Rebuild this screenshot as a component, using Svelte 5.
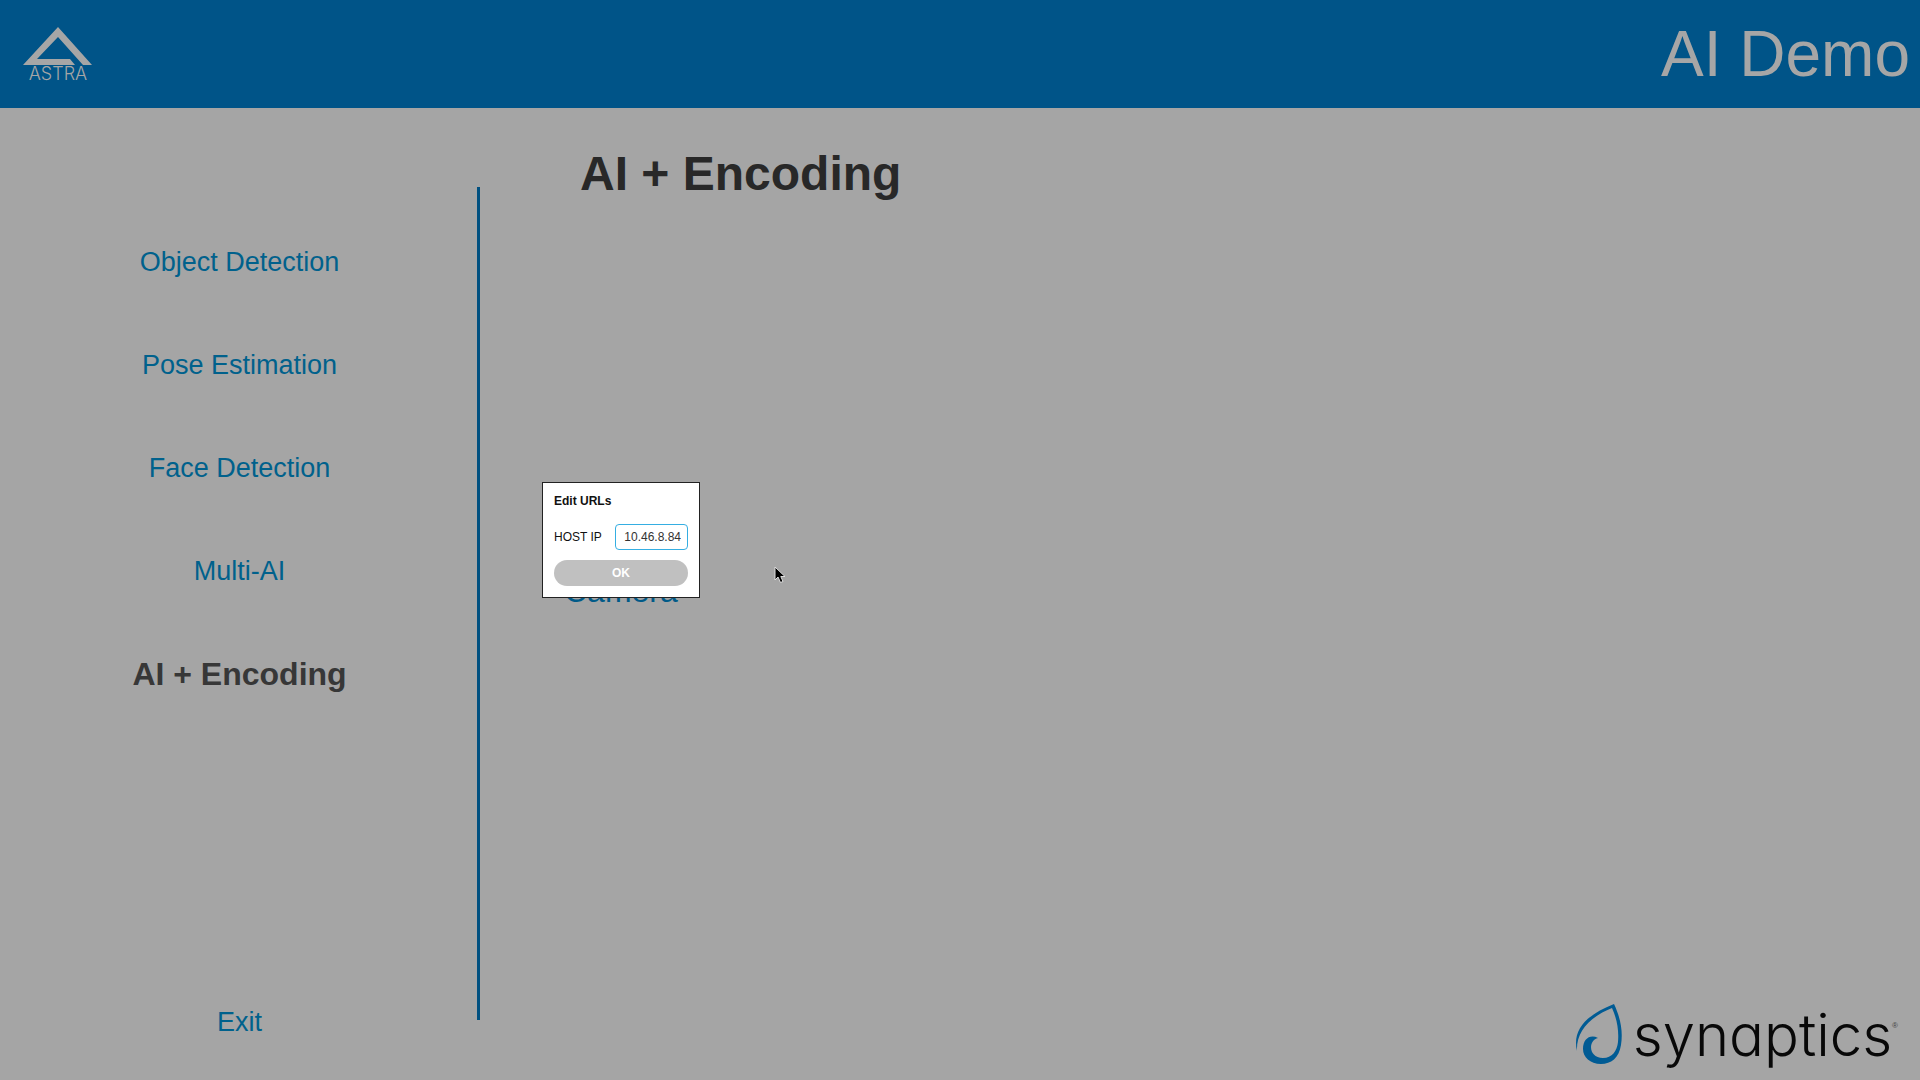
<script lang="ts">
  const items = ['Object Detection', 'Pose Estimation', 'Face Detection', 'Multi-AI', 'AI + Encoding'];
  let active = $state('AI + Encoding');
  let host = $state('10.46.8.84');
</script>

<div class="app">
  <header>
    <div class="astra">
      <svg viewBox="0 0 70 40" aria-hidden="true">
        <path d="M35 0 L69 38 H60 L35 10 L14 32 H47 L52 38 H0 Z" />
      </svg>
      <span>ASTRA</span>
    </div>
    <p class="product">AI Demo</p>
  </header>

  <div class="body">
    <nav>
      {#each items as item}
        <button class="link" class:active={item === active} onclick={() => (active = item)}>{item}</button>
      {/each}
      <button class="link exit">Exit</button>
    </nav>
    <main>
      <h1>{active}</h1>
      <button class="camera">Camera</button>
      <div class="synaptics">
        <svg viewBox="0 0 48 62" aria-hidden="true">
          <path d="M2 47 C-3 26 11 11 39 0 C46 15 48 28 46 41 C44 54 36 60 26 60 C15 60 8 53 8 45 C8 35 15 30 23 34 C13 36 13 54 28 54 C37 54 42 47 43 38 C44 26 42 15 37 4 C15 13 1 27 2 47 Z" />
        </svg>
        <span>synaptics</span><sup>®</sup>
      </div>
    </main>
  </div>

  <form class="dialog" onsubmit={(e) => e.preventDefault()}>
    <h2>Edit URLs</h2>
    <div class="field">
      <label for="host">HOST IP</label>
      <input id="host" type="text" bind:value={host} />
    </div>
    <button class="ok">OK</button>
  </form>

  <svg class="cursor" viewBox="0 0 12 18" aria-hidden="true">
    <path d="M1 1 V14 L4 11 L6.500 16.500 L9 15.500 L6.800 10.500 H11 Z" />
  </svg>
</div>

<style>
  :global(body) {
    margin: 0;
  }
  .app {
    position: relative;
    display: flex;
    flex-direction: column;
    min-height: 100vh;
    overflow: hidden;
    background: #a5a5a5;
    font-family: 'Liberation Sans', Arial, sans-serif;
  }
  button {
    border: 0;
    background: none;
    font-family: inherit;
    cursor: pointer;
  }
  header {
    display: flex;
    align-items: center;
    justify-content: space-between;
    height: 108px;
    padding: 0 10px;
    background: #005488;
    color: #a6a6a6;
  }
  .astra {
    display: flex;
    flex-direction: column;
    align-items: center;
    width: 96px;
  }
  .astra svg {
    width: 70px;
    height: 40px;
    fill: #a6a6a6;
  }
  .astra span {
    font: 300 18px/14px Inter, sans-serif;
  }
  .product {
    margin: 0;
    font-size: 64px;
    line-height: 72px;
  }
  .body {
    display: flex;
    flex: 1;
  }
  nav {
    display: flex;
    flex-direction: column;
    box-sizing: border-box;
    width: 25%;
    margin: 79px 0 60px;
    padding: 24px 0 0 2px;
    border-right: 3px solid #005080;
  }
  .link {
    height: 103px;
    padding: 0;
    color: #00618c;
    font-size: 27px;
  }
  .link.active {
    color: #373737;
    font-size: 32px;
    font-weight: 700;
  }
  .exit {
    height: 52px;
    margin-top: auto;
    margin-bottom: -28px;
  }
  main {
    display: flex;
    flex: 1;
    flex-direction: column;
    align-items: flex-start;
  }
  h1 {
    margin: 38px 0 0 100px;
    color: #282828;
    font-size: 48px;
    line-height: 56px;
  }
  .camera {
    margin: 371px 0 0 84px;
    padding: 0;
    color: #005a88;
    font-size: 32px;
    line-height: 36px;
  }
  .synaptics {
    display: flex;
    align-self: flex-end;
    align-items: center;
    gap: 10px;
    margin: auto 22px 14px 0;
  }
  .synaptics svg {
    width: 48px;
    height: 62px;
    fill: #005b94;
  }
  .synaptics span {
    color: #080808;
    font: 300 58px/62px Inter, sans-serif;
    font-feature-settings: 'cv11';
  }
  .synaptics sup {
    margin-left: -10px;
    align-self: flex-start;
    color: #444;
    font-size: 8px;
    line-height: 44px;
  }
  .dialog {
    position: absolute;
    top: 482px;
    left: 542px;
    box-sizing: border-box;
    width: 158px;
    padding: 11px;
    border: 1px solid #222;
    background: #fff;
    color: #111;
    font-size: 12px;
  }
  h2 {
    margin: 0 0 16px;
    font-size: 12px;
    line-height: 14px;
  }
  .field {
    display: flex;
    align-items: center;
    justify-content: space-between;
  }
  input {
    box-sizing: border-box;
    width: 73px;
    height: 26px;
    padding: 0 6px;
    border: 1px solid #35aee2;
    border-radius: 4px;
    outline: 0;
    color: #333;
    font: 12px 'Liberation Sans', Arial, sans-serif;
    text-align: right;
  }
  .ok {
    display: block;
    width: 100%;
    height: 26px;
    margin-top: 10px;
    border-radius: 13px;
    background: #c0c0c0;
    color: #fff;
    font-size: 12px;
    font-weight: 700;
  }
  .cursor {
    position: absolute;
    top: 566px;
    left: 774px;
    width: 12px;
    height: 18px;
    fill: #000;
    stroke: #ddd;
    stroke-width: 1;
  }
</style>
